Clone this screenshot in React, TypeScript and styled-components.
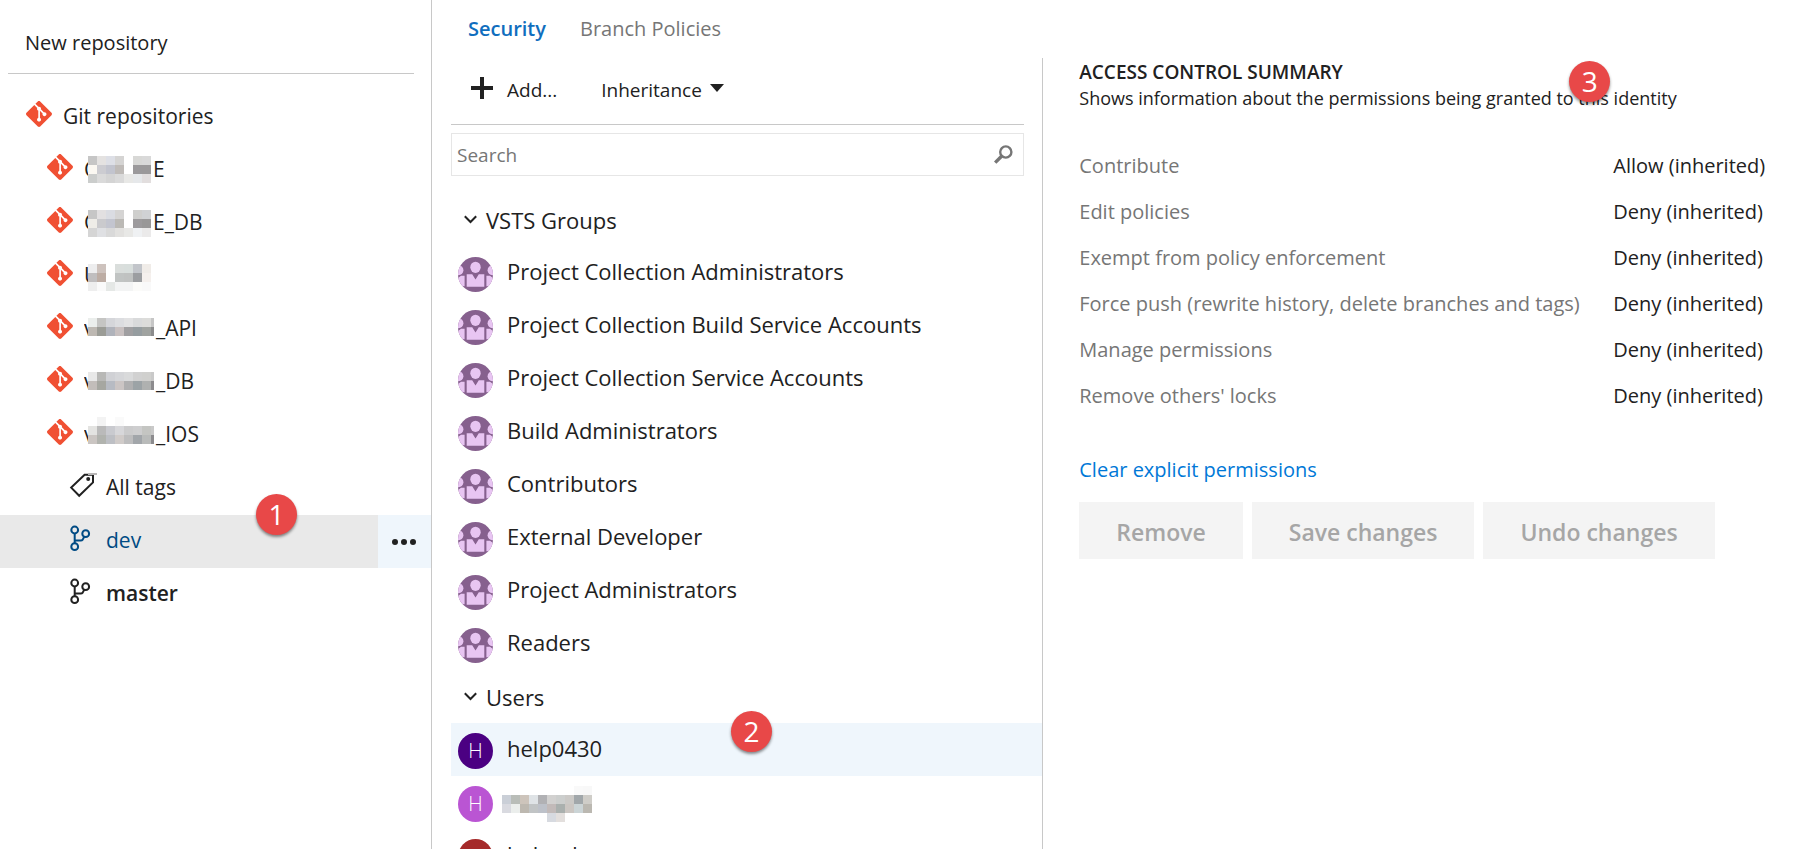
import React from "react";
import styled, { createGlobalStyle, css } from "styled-components";
import { SiGit } from "react-icons/si";

const ink = "#212121";
const muted = "#767676";
const line = "#c8c8c8";
const hover = "#eff6fc";

const GlobalStyle = createGlobalStyle`
  *, *::before, *::after { box-sizing: border-box; }
  body {
    margin: 0;
    background: #fff;
    color: ${ink};
    font-family: "Open Sans", "Noto Sans", sans-serif;
    font-size: 20px;
  }
  button, input { font: inherit; color: inherit; }
  button { border: 0; padding: 0; background: none; cursor: pointer; }
  h2, p, ul { margin: 0; padding: 0; }
  ul { list-style: none; }
  a { text-decoration: none; }
`;

const Page = styled.div`
  display: flex;
  height: 100vh;
  overflow: hidden;
`;

const Sidebar = styled.aside`
  flex: none;
  width: 432px;
  border-right: 1px solid ${line};
`;

const SidebarHeader = styled.div`
  height: 74px;
  margin: 0 17px 17px 8px;
  padding: 12px 17px 0;
  border-bottom: 1px solid ${line};
`;

const NewRepository = styled.button`
  height: 61px;
`;

const TreeRow = styled.li<{ $indent: number; $selected?: boolean }>`
  position: relative;
  display: flex;
  height: 53px;
  padding-left: ${(p) => p.$indent}px;
  font-size: 21px;
  ${(p) =>
    p.$selected &&
    css`
      color: #004b84;
      background: #e9e9e9;
    `}
`;

const TreeLink = styled.a<{ $gap: number; $bold?: boolean }>`
  flex: 1;
  display: flex;
  align-items: center;
  gap: ${(p) => p.$gap}px;
  height: 50px;
  color: inherit;
  font-weight: ${(p) => (p.$bold ? 600 : 400)};

  > svg {
    flex: none;
    margin-bottom: 4px;
    overflow: visible;
  }
`;

const GitIcon = styled(SiGit)`
  width: 26px;
  height: 26px;
  color: #f05033;
`;

const RepoName = styled.span`
  display: flex;
  height: 50px;
  line-height: 50px;
`;

const FirstLetter = styled.span`
  width: 4px;
  overflow: hidden;
`;

const MosaicCells = styled.svg`
  flex: none;
  display: block;
  margin-right: 2px;
`;

const MoreButton = styled.button`
  width: 53px;
  padding-right: 2px;
  background: ${hover};
  display: flex;
  align-items: center;
  justify-content: center;
`;

const Badge = styled.span<{ $left: number; $top: number }>`
  position: absolute;
  left: ${(p) => p.$left}px;
  top: ${(p) => p.$top}px;
  width: 41px;
  height: 41px;
  border-radius: 50%;
  background: #e84848;
  box-shadow: 0 2px 3px rgba(0, 0, 0, 0.45);
  color: #fff;
  font-size: 28px;
  font-weight: 400;
  line-height: 40px;
  text-align: center;
`;

const Main = styled.main`
  flex: 1;
  min-width: 0;
  display: flex;
  flex-direction: column;
`;

const Tabs = styled.nav`
  flex: none;
  display: flex;
  gap: 34px;
  height: 58px;
  padding: 0 36px;
  line-height: 58px;
`;

const Tab = styled.a<{ $active?: boolean }>`
  color: ${(p) => (p.$active ? "#106ebe" : muted)};
  font-weight: ${(p) => (p.$active ? 600 : 400)};
`;

const Columns = styled.div`
  flex: 1;
  min-height: 0;
  display: grid;
  grid-template-columns: 44% 1fr;
`;

const Members = styled.section`
  min-height: 0;
  overflow: hidden;
  padding-left: 19px;
`;

const Toolbar = styled.div`
  display: flex;
  align-items: center;
  gap: 44px;
  height: 67px;
  margin-right: 18px;
  padding: 0 20px 2px;
  border-bottom: 1px solid ${line};
  font-size: 19px;
`;

const ToolButton = styled.button<{ $gap: number }>`
  display: flex;
  align-items: center;
  gap: ${(p) => p.$gap}px;

  svg { margin-bottom: 4px; }
`;

const SearchBox = styled.label`
  display: flex;
  align-items: center;
  height: 43px;
  margin: 8px 18px 17px 0;
  padding: 0 10px 0 5px;
  border: 1px solid #e6e6e6;
`;

const SearchInput = styled.input`
  flex: 1;
  min-width: 0;
  padding: 1px 0 0;
  border: 0;
  outline: 0;
  background: none;
  font-size: 19px;

  &::placeholder { color: ${muted}; opacity: 1; }
`;

const GroupHeader = styled.button`
  display: flex;
  align-items: center;
  gap: 9px;
  width: 100%;
  height: 53px;
  padding: 0 13px;
  font-size: 22px;
`;

const MemberRow = styled.li<{ $selected?: boolean }>`
  position: relative;
  display: flex;
  align-items: center;
  gap: 14px;
  height: 53px;
  padding: 0 7px 3px;
  font-size: 22px;
  background: ${(p) => (p.$selected ? hover : "transparent")};

  > svg { flex: none; }
`;

const HiddenNameRow = styled(MemberRow)`
  gap: 9px;
`;

const Avatar = styled.span<{ $color: string }>`
  flex: none;
  width: 35px;
  height: 36px;
  margin-top: 6px;
  border-radius: 50%;
  background: ${(p) => p.$color};
  color: #fff;
  font-size: 20px;
  font-weight: 300;
  line-height: 36px;
  text-align: center;
`;

const GroupAvatar = styled.svg`
  margin-top: 7px;
`;

const Summary = styled.section`
  padding: 0 24px 0 36px;
  border-left: 1px solid ${line};
`;

const SummaryHeader = styled.header`
  position: relative;
  margin-bottom: 33px;
`;

const SummaryTitle = styled.h2`
  font-size: 19px;
  font-weight: 600;
  line-height: 28px;
`;

const SummaryText = styled.p`
  font-size: 18px;
  line-height: 24px;
`;

const Permissions = styled.table`
  border-collapse: collapse;

  th, td {
    height: 46px;
    padding: 0;
    line-height: 30px;
    text-align: left;
    font-weight: 400;
    white-space: nowrap;
  }
  th {
    min-width: 534px;
    color: ${muted};
  }
`;

const ClearLink = styled.a`
  display: block;
  margin: 37px 0 19px;
  color: #0078d7;
  line-height: 27px;
`;

const Actions = styled.div`
  display: flex;
  gap: 9px;
`;

const ActionButton = styled.button`
  height: 57px;
  padding: 2px 37px 0;
  background: #f4f4f4;
  color: #a6a6a6;
  font-size: 23px;
  font-weight: 600;
  white-space: nowrap;
`;

const CELL = 9;

function Mosaic({ rows, top, width, height = 53 }: { rows: string[]; top: number; width: number; height?: number }) {
  return (
    <MosaicCells width={width} height={height} aria-hidden="true" shapeRendering="crispEdges">
      {rows.map((row, y) =>
        row.split(" ").map((c, x) =>
          c === "-" ? null : (
            <rect key={`${x}-${y}`} x={x * CELL} y={top + y * CELL} width={CELL} height={CELL} fill={`#${c}`} />
          ),
        ),
      )}
    </MosaicCells>
  );
}

const repositories = [
  { first: "C", rest: "E", top: 12, width: 63, rows: ["c6c6c6 e4e2e1 dddfe6 d5d4d3 - d8d8d6 d9d9d9", "fbf8f2 ccccd1 c2c4ce bfbbb8 - 9b999b 9b999a", "cbcdcc dadada d4d4d4 dadada e8e8e6 e6e8ea e2dede"] },
  { first: "C", rest: "E_DB", top: 13, width: 63, rows: ["c6c6c6 e2e0e1 dadce2 d5d4d3 - cfcfcd d0d2d4", "efede8 cacacd c3c5cf bbb9b5 - 9d9b9d 999898", "d5d5d5 dfe0e3 d9d9d9 e2e1df e8e8e6 eff1f3 ebeaea"] },
  { first: "U", rest: "", top: 14, width: 63, rows: ["ededee cdc2bd - dadedc d8dedc c2c5ca f0ece8", "c0bebf bdada4 - c1c4c3 c0c2c1 9c9ea1 f5f0ed", "eeeeee fafafa e5e8e6 f3f4f4 f3f4f4 fbfbf9 f9f9f9"] },
  { first: "v", rest: "_API", top: 15, width: 66, rows: ["ebeeec c5c5c3 d5d6da dcdde0 e2e2e3 d9dadb dcdcda c6c6c6", "bdb8b2 9b9c96 b0b3bb c8c0c0 a09fa1 969da0 a0a3a0 8b8b8c"] },
  { first: "v", rest: "_DB", top: 16, width: 66, rows: ["e8e8e8 b8b8b6 d0d1d5 d5d6d9 d9dadb d1d1d1 d0d0ce c9c9c9", "c2bdba a6a7a1 b7bbc3 cbc5c4 afafb0 9ca3a6 afb1b0 8c8b8e"] },
  { first: "v", rest: "_IOS", top: 8, width: 66, rows: ["- f3f3f3 - fafafa - - - -", "e3e3e1 bababa c9cacf d7d7da cbcbcc cececf c4c5c2 c9c9c9", "cac5c2 b1b3ae bdbfc4 d0cbc9 bdbdbe a2a6aa b9bbba 8c8b8e"] },
];

const groups = [
  "Project Collection Administrators",
  "Project Collection Build Service Accounts",
  "Project Collection Service Accounts",
  "Build Administrators",
  "Contributors",
  "External Developer",
  "Project Administrators",
  "Readers",
];

const permissions = [
  ["Contribute", "Allow (inherited)"],
  ["Edit policies", "Deny (inherited)"],
  ["Exempt from policy enforcement", "Deny (inherited)"],
  ["Force push (rewrite history, delete branches and tags)", "Deny (inherited)"],
  ["Manage permissions", "Deny (inherited)"],
  ["Remove others' locks", "Deny (inherited)"],
];

const BranchIcon = () => (
  <svg width="22" height="27" viewBox="0 0 22 27" fill="none" stroke="currentColor" strokeWidth="2" aria-hidden="true">
    <circle cx="4.7" cy="5" r="3.4" />
    <circle cx="15.7" cy="8.7" r="3.4" />
    <circle cx="4.7" cy="21.7" r="3.4" />
    <path d="M4.7 8.4v9.9M4.7 15.6h6.1q1.2 0 1.9-1l1.5-2.8" />
  </svg>
);

const TagIcon = () => (
  <svg width="24" height="25" viewBox="0 0 24 25" fill="none" aria-hidden="true">
    <path d="M1.2 14.6L9.2 22.8 23 9.4V1.8H14.6z" stroke="currentColor" strokeWidth="2" />
    <circle cx="18.2" cy="6" r="2" fill="currentColor" />
    <path d="M18 0h9v2h-9z" fill="#b9b7b7" />
  </svg>
);

const GroupIcon = () => (
  <GroupAvatar width="35" height="35" viewBox="0 0 35 35" aria-hidden="true">
    <clipPath id="avatar-circle">
      <circle cx="17.5" cy="17.5" r="17.5" />
    </clipPath>
    <g clipPath="url(#avatar-circle)">
      <path d="M0 0h35v35H0z" fill="#86608e" />
      <g fill="#e8c5f2">
        <ellipse cx="17.5" cy="10.3" rx="5.2" ry="5.6" />
        <ellipse cx=".6" cy="13.2" rx="4.8" ry="5" />
        <ellipse cx="34.4" cy="13.2" rx="4.8" ry="5" />
        <path d="M8.7 17.2h5.5l3.3 5.3 3.3-5.3h5.5v12.5H8.7z" />
        <path d="M0 21l3-2.2h3.6v10.4H0zM35 21l-3-2.2h-3.6v10.4H35z" />
      </g>
    </g>
  </GroupAvatar>
);

const Chevron = () => (
  <svg width="13" height="9" viewBox="0 0 13 9" fill="none" stroke="currentColor" strokeWidth="2" aria-hidden="true">
    <path d="M.8 1.2l5.7 5.8 5.7-5.8" />
  </svg>
);

export default function App() {
  return (
    <>
      <GlobalStyle />
      <Page>
        <Sidebar>
          <SidebarHeader>
            <NewRepository type="button">New repository</NewRepository>
          </SidebarHeader>
          <ul>
            <TreeRow $indent={26}>
              <TreeLink href="#repositories" $gap={11}>
                <GitIcon aria-hidden="true" />
                Git repositories
              </TreeLink>
            </TreeRow>
            {repositories.map((repo, i) => (
              <TreeRow key={i} $indent={47}>
                <TreeLink href="#repository" $gap={11}>
                  <GitIcon aria-hidden="true" />
                  <RepoName>
                    <FirstLetter>{repo.first}</FirstLetter>
                    <Mosaic rows={repo.rows} top={repo.top} width={repo.width} />
                    {repo.rest}
                  </RepoName>
                </TreeLink>
              </TreeRow>
            ))}
            <TreeRow $indent={70}>
              <TreeLink href="#tags" $gap={12}>
                <TagIcon />
                All tags
              </TreeLink>
            </TreeRow>
            <TreeRow $indent={70} $selected>
              <TreeLink href="#dev" $gap={14}>
                <BranchIcon />
                dev
              </TreeLink>
              <MoreButton type="button" aria-label="More actions">
                <svg width="24" height="6" viewBox="0 0 24 6" fill={ink} aria-hidden="true">
                  <circle cx="3" cy="3" r="3" />
                  <circle cx="12" cy="3" r="3" />
                  <circle cx="21" cy="3" r="3" />
                </svg>
              </MoreButton>
              <Badge $left={256} $top={-21}>1</Badge>
            </TreeRow>
            <TreeRow $indent={70}>
              <TreeLink href="#master" $gap={14} $bold>
                <BranchIcon />
                master
              </TreeLink>
            </TreeRow>
          </ul>
        </Sidebar>

        <Main>
          <Tabs>
            <Tab href="#security" $active>Security</Tab>
            <Tab href="#policies">Branch Policies</Tab>
          </Tabs>
          <Columns>
            <Members>
              <Toolbar>
                <ToolButton type="button" $gap={14}>
                  <svg width="22" height="22" viewBox="0 0 22 22" fill="currentColor" aria-hidden="true">
                    <path d="M9 0h4v9h9v4h-9v9H9v-9H0V9h9z" />
                  </svg>
                  Add...
                </ToolButton>
                <ToolButton type="button" $gap={8}>
                  Inheritance
                  <svg width="14" height="8" viewBox="0 0 14 8" fill="currentColor" aria-hidden="true">
                    <path d="M0 0h14L7 8z" />
                  </svg>
                </ToolButton>
              </Toolbar>
              <SearchBox>
                <SearchInput type="text" placeholder="Search" aria-label="Search" />
                <svg width="19" height="19" viewBox="0 0 19 19" fill="none" stroke={muted} aria-hidden="true">
                  <circle cx="11.8" cy="7" r="5.6" strokeWidth="2.4" />
                  <path d="M7.8 11L1.2 17.6" strokeWidth="3.4" />
                </svg>
              </SearchBox>

              <GroupHeader type="button">
                <Chevron />
                VSTS Groups
              </GroupHeader>
              <ul>
                {groups.map((name) => (
                  <MemberRow key={name}>
                    <GroupIcon />
                    {name}
                  </MemberRow>
                ))}
              </ul>
              <GroupHeader type="button">
                <Chevron />
                Users
              </GroupHeader>
              <ul>
                <MemberRow $selected>
                  <Avatar $color="#4b0082">H</Avatar>
                  help0430
                  <Badge $left={280} $top={-12}>2</Badge>
                </MemberRow>
                <HiddenNameRow>
                  <Avatar $color="#ba55d3">H</Avatar>
                  <Mosaic
                    top={11}
                    width={90}
                    height={53}
                    rows={[
                      "- - - - - - - - f9f9f9 f8f8f8",
                      "cacfd7 b9bdb8 cdc4bb dfe3e6 b1b1b4 d2d1d0 cccecd cbc9c6 a1a7aa cfcdc8",
                      "d9dae0 ebeeec bdb8b0 c1c4c5 bdc1c9 c2bab9 aab0ae cbc6c2 cbd4d6 bbb8b1",
                      "- - - - - d7dae0 e3dfdd - - -",
                    ]}
                  />
                </HiddenNameRow>
                <MemberRow>
                  <Avatar $color="#a52a2a">H</Avatar>
                  helped
                </MemberRow>
              </ul>
            </Members>

            <Summary>
              <SummaryHeader>
                <SummaryTitle>ACCESS CONTROL SUMMARY</SummaryTitle>
                <SummaryText>Shows information about the permissions being granted to this identity</SummaryText>
                <Badge $left={490} $top={3}>3</Badge>
              </SummaryHeader>
              <Permissions>
                <tbody>
                  {permissions.map(([name, value]) => (
                    <tr key={name}>
                      <th scope="row">{name}</th>
                      <td>{value}</td>
                    </tr>
                  ))}
                </tbody>
              </Permissions>
              <ClearLink href="#clear">Clear explicit permissions</ClearLink>
              <Actions>
                <ActionButton type="button" disabled>Remove</ActionButton>
                <ActionButton type="button" disabled>Save changes</ActionButton>
                <ActionButton type="button" disabled>Undo changes</ActionButton>
              </Actions>
            </Summary>
          </Columns>
        </Main>
      </Page>
    </>
  );
}
